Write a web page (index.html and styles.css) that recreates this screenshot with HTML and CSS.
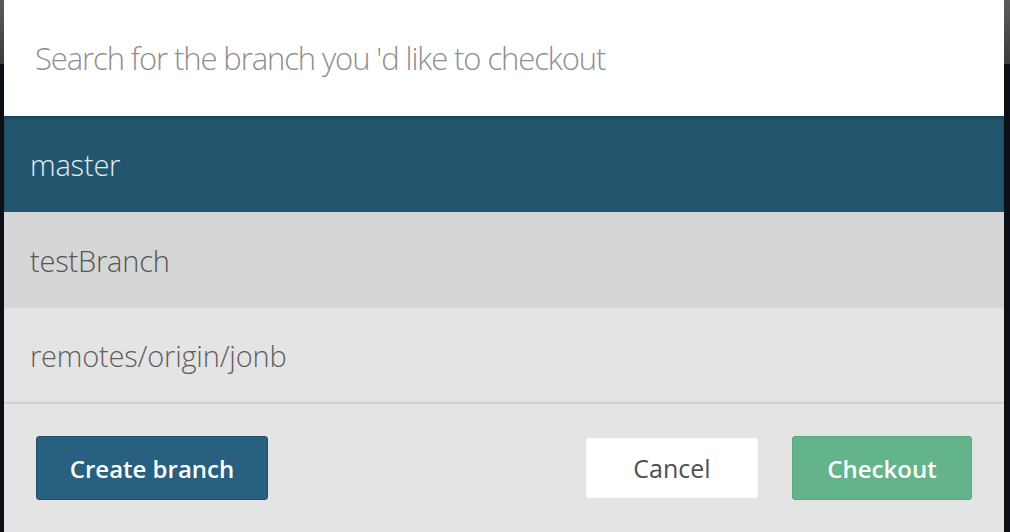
FILE: index.html
```html
<!DOCTYPE html>
<html>
<head>
<meta charset="utf-8">
<link rel="stylesheet" href="styles.css">
</head>
<body>
<div class="backdrop">
  <div class="modal">
    <div class="search">
      <input class="search-input" type="text" placeholder="Search for the branch you 'd like to checkout">
    </div>
    <ul class="branches">
      <li class="branch selected">master</li>
      <li class="branch hover">testBranch</li>
      <li class="branch">remotes/origin/jonb</li>
    </ul>
    <div class="footer">
      <button class="btn btn-create">Create branch</button>
      <div class="actions">
        <button class="btn btn-cancel">Cancel</button>
        <button class="btn btn-checkout">Checkout</button>
      </div>
    </div>
  </div>
</div>
</body>
</html>
```
FILE: styles.css
```css
* { box-sizing: border-box; }
html, body { margin: 0; padding: 0; }
body {
  width: 1010px;
  height: 532px;
  overflow: hidden;
  background: linear-gradient(to bottom, #5a5a5a 0, #3c3c3c 64px, #0b1016 64px, #0b1016 100%);
  font-family: "Open Sans", "Noto Sans", sans-serif;
}
.backdrop {
  display: flex;
  padding-left: 4px;
  height: 532px;
}
.modal {
  width: 1000px;
  height: 532px;
  display: flex;
  flex-direction: column;
  background: #e4e4e4;
}
.search {
  height: 116px;
  background: #ffffff;
  display: flex;
  align-items: center;
  padding: 0 0 0 31px;
}
.search-input {
  border: 0;
  outline: none;
  width: 100%;
  font-family: "Open Sans", sans-serif;
  font-weight: 300;
  font-size: 31px;
  letter-spacing: -1.1px;
  color: #8c8c8c;
  background: transparent;
  padding: 0;
  margin-top: 0;
}
.search-input::placeholder { color: #8f8f8f; opacity: 1; }
.branches {
  list-style: none;
  margin: 0;
  padding: 0;
}
.branch {
  height: 96px;
  display: flex;
  align-items: center;
  padding: 0 0 0 26px;
  font-weight: 300;
  font-size: 29px;
  letter-spacing: -0.2px;
  color: #5f5f5f;
  background: #e4e4e4;
}
.branch.selected {
  background: #22566f;
  color: #e6edf2;
  box-shadow: inset 0 2px 3px rgba(0, 0, 0, 0.25);
}
.branch.hover {
  background: #d6d6d6;
  color: #555555;
}
.branch:last-child {
  border-bottom: 2px solid #cfcfcf;
}
.footer {
  flex: 1;
  display: flex;
  align-items: center;
  justify-content: space-between;
  padding: 0 32px;
}
.actions {
  display: flex;
  align-items: center;
  gap: 34px;
}
.btn {
  font-family: "Open Sans", sans-serif;
  font-weight: 600;
  font-size: 24px;
  border-radius: 3px;
  cursor: pointer;
  padding: 0;
  display: flex;
  align-items: center;
  justify-content: center;
}
.btn-create {
  width: 232px;
  height: 64px;
  background: #286080;
  border: 1px solid #1f506b;
  color: #ffffff;
}
.btn-cancel {
  width: 172px;
  height: 60px;
  background: #ffffff;
  border: 0;
  color: #505050;
  font-weight: 500;
  font-size: 25px;
}
.btn-checkout {
  width: 180px;
  height: 64px;
  background: #64b48b;
  border: 1px solid #59a87f;
  color: #ffffff;
}
```
